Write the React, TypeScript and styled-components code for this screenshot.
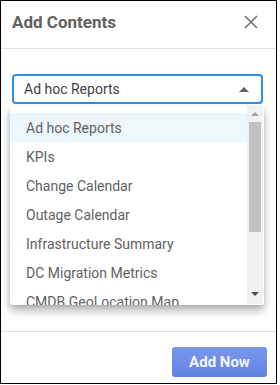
import { FC } from 'react';
import styled, { createGlobalStyle } from 'styled-components';

const GlobalStyle = createGlobalStyle`
  body {
    margin: 0;
    background: #fff;
    font-family: Roboto, 'Liberation Sans', sans-serif;
  }
`;

const options = [
  'Ad hoc Reports',
  'KPIs',
  'Change Calendar',
  'Outage Calendar',
  'Infrastructure Summary',
  'DC Migration Metrics',
  'CMDB GeoLocation Map',
];

const App: FC = () => {
  const selected = options[0];

  return (
    <>
      <GlobalStyle />
      <StyledDialog>
        <StyledHeader>
          <StyledTitle>Add Contents</StyledTitle>
          <StyledClose aria-label="close">
            <svg width="14" height="14" viewBox="0 0 14 14">
              <path d="M1 1L13 13M13 1L1 13" stroke="#707070" strokeWidth="1.6" fill="none" />
            </svg>
          </StyledClose>
        </StyledHeader>

        <StyledBody>
          <StyledSelect>
            <span>{selected}</span>
            <StyledCaret />
          </StyledSelect>

          <StyledMenu>
            <StyledList>
              {options.map((option) => (
                <StyledOption key={option} active={option === selected}>
                  {option}
                </StyledOption>
              ))}
            </StyledList>
            <StyledScrollbar>
              <StyledArrow up />
              <StyledThumb />
              <StyledArrow />
            </StyledScrollbar>
          </StyledMenu>
        </StyledBody>

        <StyledFooter>
          <StyledButton>Add Now</StyledButton>
        </StyledFooter>
      </StyledDialog>
    </>
  );
};

export default App;

const StyledDialog = styled.div`
  box-sizing: border-box;
  width: 277px;
  height: 384px;
  border: 1px solid #000;
  background: #fff;
  display: flex;
  flex-direction: column;
`;

const StyledHeader = styled.div`
  height: 48px;
  flex-shrink: 0;
  box-sizing: border-box;
  border-bottom: 1px solid #e0e0e0;
  padding: 0 18px 6px 11px;
  display: flex;
  align-items: center;
  justify-content: space-between;
`;

const StyledTitle = styled.h1`
  margin: 0;
  font-size: 17px;
  font-weight: 700;
  color: #616161;
`;

const StyledClose = styled.button`
  border: none;
  background: none;
  padding: 0;
  width: 14px;
  height: 14px;
  display: flex;
  cursor: pointer;
`;

const StyledBody = styled.div`
  position: relative;
  flex: 1;
  padding: 25px 13px 0 11px;
`;

const StyledSelect = styled.div`
  box-sizing: border-box;
  height: 30px;
  border: 2px solid #2b8fe8;
  border-radius: 4px;
  padding: 0 12px 0 10px;
  display: flex;
  align-items: center;
  justify-content: space-between;
  font-size: 14px;
  color: #424242;
`;

const StyledCaret = styled.span`
  width: 0;
  height: 0;
  border-left: 5px solid transparent;
  border-right: 5px solid transparent;
  border-bottom: 5px solid #616161;
`;

const StyledMenu = styled.div`
  position: absolute;
  top: 57px;
  left: 9px;
  width: 254px;
  height: 199px;
  background: #fff;
  border-radius: 2px;
  box-shadow: 0 6px 10px rgba(0, 0, 0, 0.28), 0 1px 4px rgba(0, 0, 0, 0.12);
  display: flex;
  overflow: hidden;
`;

const StyledList = styled.ul`
  flex: 1;
  margin: 0;
  padding: 7px 0 0;
  list-style: none;
`;

const StyledOption = styled.li<{ active?: boolean }>`
  height: 29px;
  padding-left: 16px;
  display: flex;
  align-items: center;
  font-size: 14px;
  color: #616161;
  white-space: nowrap;
  background: ${({ active }) => (active ? '#edf6fd' : 'transparent')};
`;

const StyledScrollbar = styled.div`
  width: 16px;
  margin: 0 1px 1px 0;
  background: #f1f1f1;
  display: flex;
  flex-direction: column;
  align-items: center;
  padding: 6px 0 8px;
  box-sizing: border-box;
`;

const StyledArrow = styled.span<{ up?: boolean }>`
  width: 0;
  height: 0;
  border-left: 4px solid transparent;
  border-right: 4px solid transparent;
  ${({ up }) =>
    up
      ? 'border-bottom: 4px solid #a3a3a3; margin-bottom: 6px;'
      : 'border-top: 4px solid #505050; margin-top: auto;'}
`;

const StyledThumb = styled.span`
  width: 12px;
  height: 110px;
  background: #c1c1c1;
`;

const StyledFooter = styled.div`
  flex-shrink: 0;
  border-top: 1px solid #e0e0e0;
  padding: 15px 9px 6px;
  display: flex;
  justify-content: flex-end;
`;

const StyledButton = styled.button`
  width: 95px;
  height: 30px;
  border: none;
  border-radius: 3px;
  background: linear-gradient(#7898ee, #6282e2);
  color: #f2f5ff;
  font-family: Roboto, 'Liberation Sans', sans-serif;
  font-size: 15px;
  font-weight: 700;
  cursor: pointer;
`;
